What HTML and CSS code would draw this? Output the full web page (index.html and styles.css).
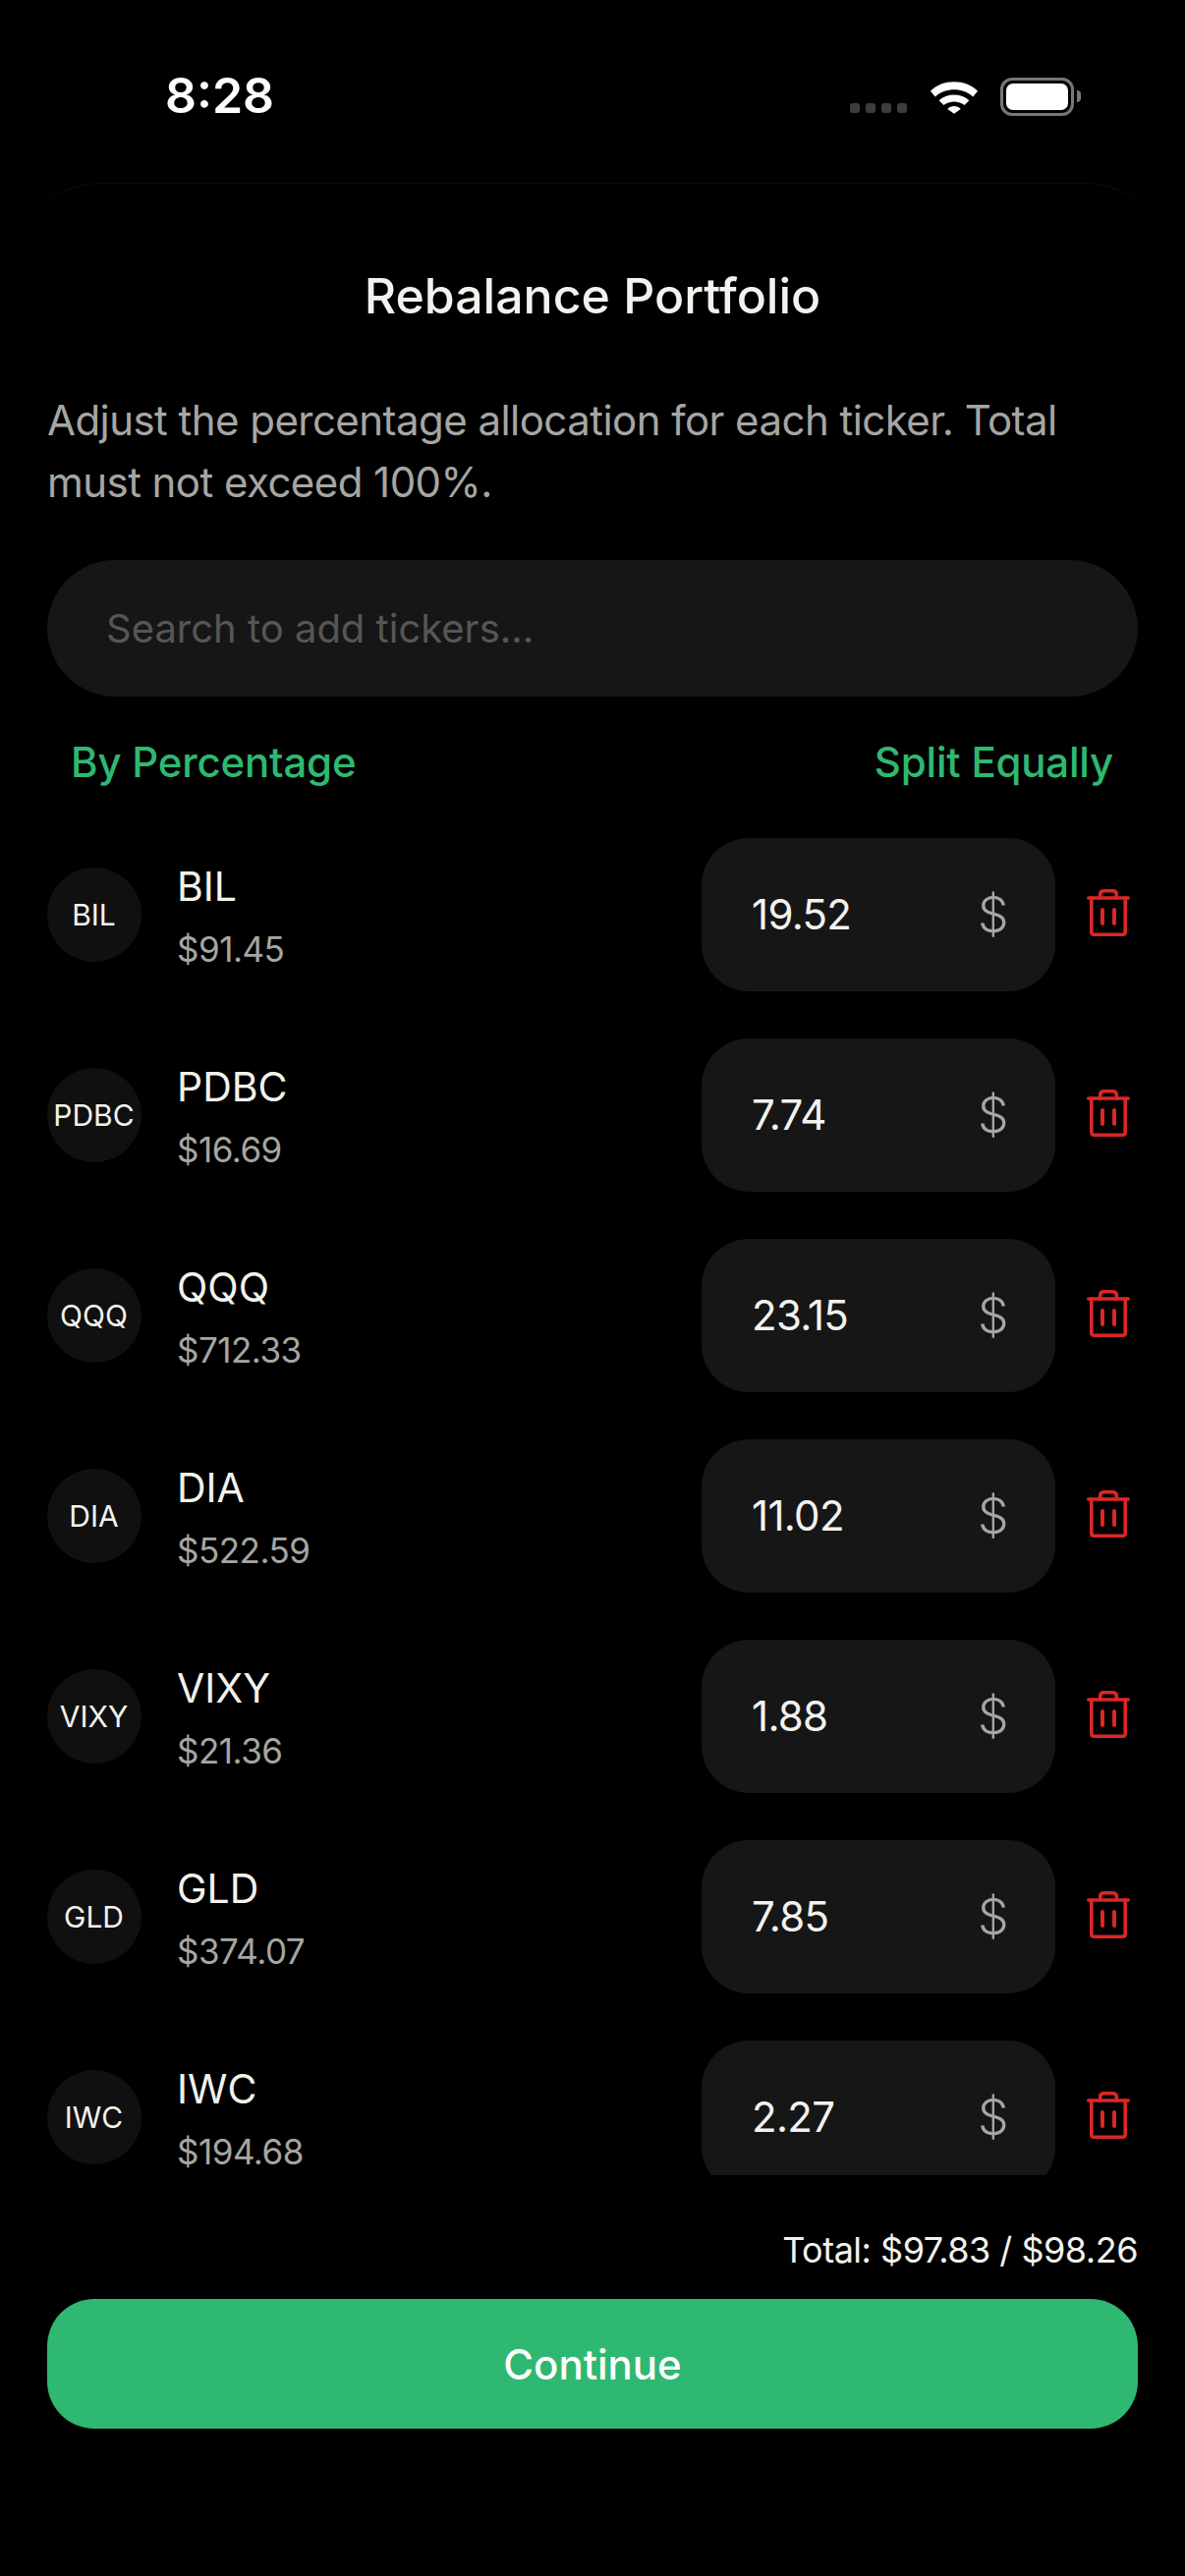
FILE: index.html
```html
<!DOCTYPE html>
<html lang="en">
  <head>
    <meta charset="UTF-8" />
    <title>Rebalance Portfolio</title>
    <link rel="stylesheet" href="styles.css">
  </head>
  <body>
    <div class="status">
      <span class="time">8:28</span>
      <div class="status-icons">
        <div class="signal"><i></i><i></i><i></i><i></i></div>
        <svg class="wifi" width="50" height="37" viewBox="0 0 52 38">
          <path d="M1 14 C14 1 38 1 51 14 L46 20 C35 10 17 10 6 20 Z" fill="#fff"/>
          <path d="M10 24 C18 16 34 16 42 24 L37 29 C31 24 21 24 15 29 Z" fill="#fff"/>
          <path d="M19 33 C23 29 29 29 33 33 L26 38 Z" fill="#fff"/>
        </svg>
        <div class="battery"><div class="battery-fill"></div></div>
        <div class="battery-cap"></div>
      </div>
    </div>

    <div class="sheet">
      <h1 class="title">Rebalance Portfolio</h1>
      <p class="desc">Adjust the percentage allocation for each ticker. Total must not exceed 100%.</p>
      <div class="search">Search to add tickers...</div>
      <div class="modes">
        <span>By Percentage</span>
        <span>Split Equally</span>
      </div>

      <div class="list">
        <div class="row">
          <div class="avatar">BIL</div>
          <div class="info"><div class="name">BIL</div><div class="price">$91.45</div></div>
          <div class="amount"><span>19.52</span><span class="unit">$</span></div>
          <svg class="trash" viewBox="0 0 44 48"><use href="#trash"/></svg>
        </div>
        <div class="row">
          <div class="avatar">PDBC</div>
          <div class="info"><div class="name">PDBC</div><div class="price">$16.69</div></div>
          <div class="amount"><span>7.74</span><span class="unit">$</span></div>
          <svg class="trash" viewBox="0 0 44 48"><use href="#trash"/></svg>
        </div>
        <div class="row">
          <div class="avatar">QQQ</div>
          <div class="info"><div class="name">QQQ</div><div class="price">$712.33</div></div>
          <div class="amount"><span>23.15</span><span class="unit">$</span></div>
          <svg class="trash" viewBox="0 0 44 48"><use href="#trash"/></svg>
        </div>
        <div class="row">
          <div class="avatar">DIA</div>
          <div class="info"><div class="name">DIA</div><div class="price">$522.59</div></div>
          <div class="amount"><span>11.02</span><span class="unit">$</span></div>
          <svg class="trash" viewBox="0 0 44 48"><use href="#trash"/></svg>
        </div>
        <div class="row">
          <div class="avatar">VIXY</div>
          <div class="info"><div class="name">VIXY</div><div class="price">$21.36</div></div>
          <div class="amount"><span>1.88</span><span class="unit">$</span></div>
          <svg class="trash" viewBox="0 0 44 48"><use href="#trash"/></svg>
        </div>
        <div class="row">
          <div class="avatar">GLD</div>
          <div class="info"><div class="name">GLD</div><div class="price">$374.07</div></div>
          <div class="amount"><span>7.85</span><span class="unit">$</span></div>
          <svg class="trash" viewBox="0 0 44 48"><use href="#trash"/></svg>
        </div>
        <div class="row">
          <div class="avatar">IWC</div>
          <div class="info"><div class="name">IWC</div><div class="price">$194.68</div></div>
          <div class="amount"><span>2.27</span><span class="unit">$</span></div>
          <svg class="trash" viewBox="0 0 44 48"><use href="#trash"/></svg>
        </div>
      </div>

      <div class="total">Total: $97.83 / $98.26</div>
      <div class="continue">Continue</div>
    </div>

    <svg width="0" height="0" class="defs">
      <symbol id="trash" viewBox="0 0 44 48">
        <g fill="none" stroke="#dc2626" stroke-width="3.6" stroke-linecap="round" stroke-linejoin="round">
          <path d="M1.800 9 H42.200"/>
          <path d="M13.700 9 V5.500 Q13.700 1.800 17.500 1.800 H26.500 Q30.300 1.800 30.300 5.500 V9"/>
          <path d="M4.800 9 V43.500 Q4.800 46.200 7.500 46.200 H36.500 Q39.200 46.200 39.200 43.500 V9"/>
          <path d="M16 21 V35" stroke-width="4"/>
          <path d="M28 21 V35" stroke-width="4"/>
        </g>
      </symbol>
    </svg>
  </body>
</html>
```

FILE: styles.css
```css
html, body {
  margin: 0;
  background: #000;
}
body {
  width: 1206px;
  height: 2622px;
  overflow: hidden;
  font-family: Inter, "Liberation Sans", sans-serif;
  color: #f2f2ee;
}
.defs {
  position: absolute;
}

.status {
  height: 186px;
  box-sizing: border-box;
  padding: 72px 106px 0 168px;
  display: flex;
  justify-content: space-between;
  align-items: flex-start;
}
.time {
  font-size: 50px;
  line-height: 50px;
  font-weight: 600;
  color: #fff;
}
.status-icons {
  display: flex;
  align-items: center;
  height: 40px;
  margin-top: 6px;
}
.signal {
  display: flex;
  gap: 6px;
  margin-top: 24px;
  margin-right: 23px;
}
.signal i {
  width: 10px;
  height: 10px;
  border-radius: 3px;
  background: #3a3f3c;
}
.wifi {
  margin-right: 22px;
  margin-bottom: 2px;
}
.battery {
  width: 75px;
  height: 39px;
  box-sizing: border-box;
  border: 3px solid #777;
  border-radius: 12px;
  padding: 3px;
}
.battery-fill {
  height: 100%;
  background: #fff;
  border-radius: 7px;
}
.battery-cap {
  width: 4px;
  height: 12px;
  margin-left: 3px;
  background: #777;
  border-radius: 0 4px 4px 0;
}

.sheet {
  height: 2436px;
  box-sizing: border-box;
  padding: 85px 48px 0;
  border-radius: 105px 105px 0 0;
  border-top: 1px solid #0c0c0c;
}
.title {
  margin: 0;
  text-align: center;
  font-size: 50px;
  line-height: 58px;
  font-weight: 500;
}
.desc {
  margin: 66px 0 0;
  font-size: 42px;
  line-height: 63px;
  letter-spacing: -0.55px;
  color: #a6a6a2;
}
.search {
  margin-top: 48px;
  height: 139px;
  box-sizing: border-box;
  padding: 0 60px;
  display: flex;
  align-items: center;
  border-radius: 70px;
  background: #161616;
  color: #565656;
  font-size: 40px;
}
.modes {
  display: flex;
  justify-content: space-between;
  padding: 0 25px 0 24px;
  margin-top: 42px;
  font-size: 42px;
  line-height: 50px;
  letter-spacing: -0.2px;
  color: #2fb871;
  font-weight: 500;
}

.list {
  margin-top: 52px;
  height: 1361px;
  overflow: hidden;
  display: flex;
  flex-direction: column;
  gap: 48px;
}
.row {
  display: flex;
  align-items: center;
  flex: none;
}
.avatar {
  width: 96px;
  height: 96px;
  flex: none;
  border-radius: 50%;
  background: #101010;
  display: flex;
  align-items: center;
  justify-content: center;
  font-size: 30px;
  padding-right: 1px;
  box-sizing: border-box;
}
.info {
  flex: 1;
  margin-left: 36px;
}
.name {
  font-size: 41px;
  line-height: 50px;
  margin-top: 2px;
}
.price {
  margin-top: 18px;
  font-size: 35px;
  line-height: 42px;
  letter-spacing: -0.5px;
  color: #a6a6a2;
}
.amount {
  width: 360px;
  height: 156px;
  box-sizing: border-box;
  padding: 0 48px 2px 51px;
  display: flex;
  align-items: center;
  justify-content: space-between;
  border-radius: 48px;
  background: #161616;
  font-size: 42px;
  letter-spacing: -0.7px;
}
.unit {
  color: #a6a6a2;
  font-size: 50px;
  font-weight: 300;
  line-height: 50px;
  margin-top: 2px;
}
.trash {
  width: 44px;
  height: 48px;
  margin: 0 8px 4px 32px;
  flex: none;
}

.total {
  margin-top: 54px;
  text-align: right;
  font-size: 36px;
  line-height: 44px;
  letter-spacing: -0.5px;
}
.continue {
  margin-top: 28px;
  height: 132px;
  display: flex;
  align-items: center;
  justify-content: center;
  border-radius: 48px;
  background: #2fb871;
  color: #fff;
  font-size: 42px;
  font-weight: 500;
}
```
